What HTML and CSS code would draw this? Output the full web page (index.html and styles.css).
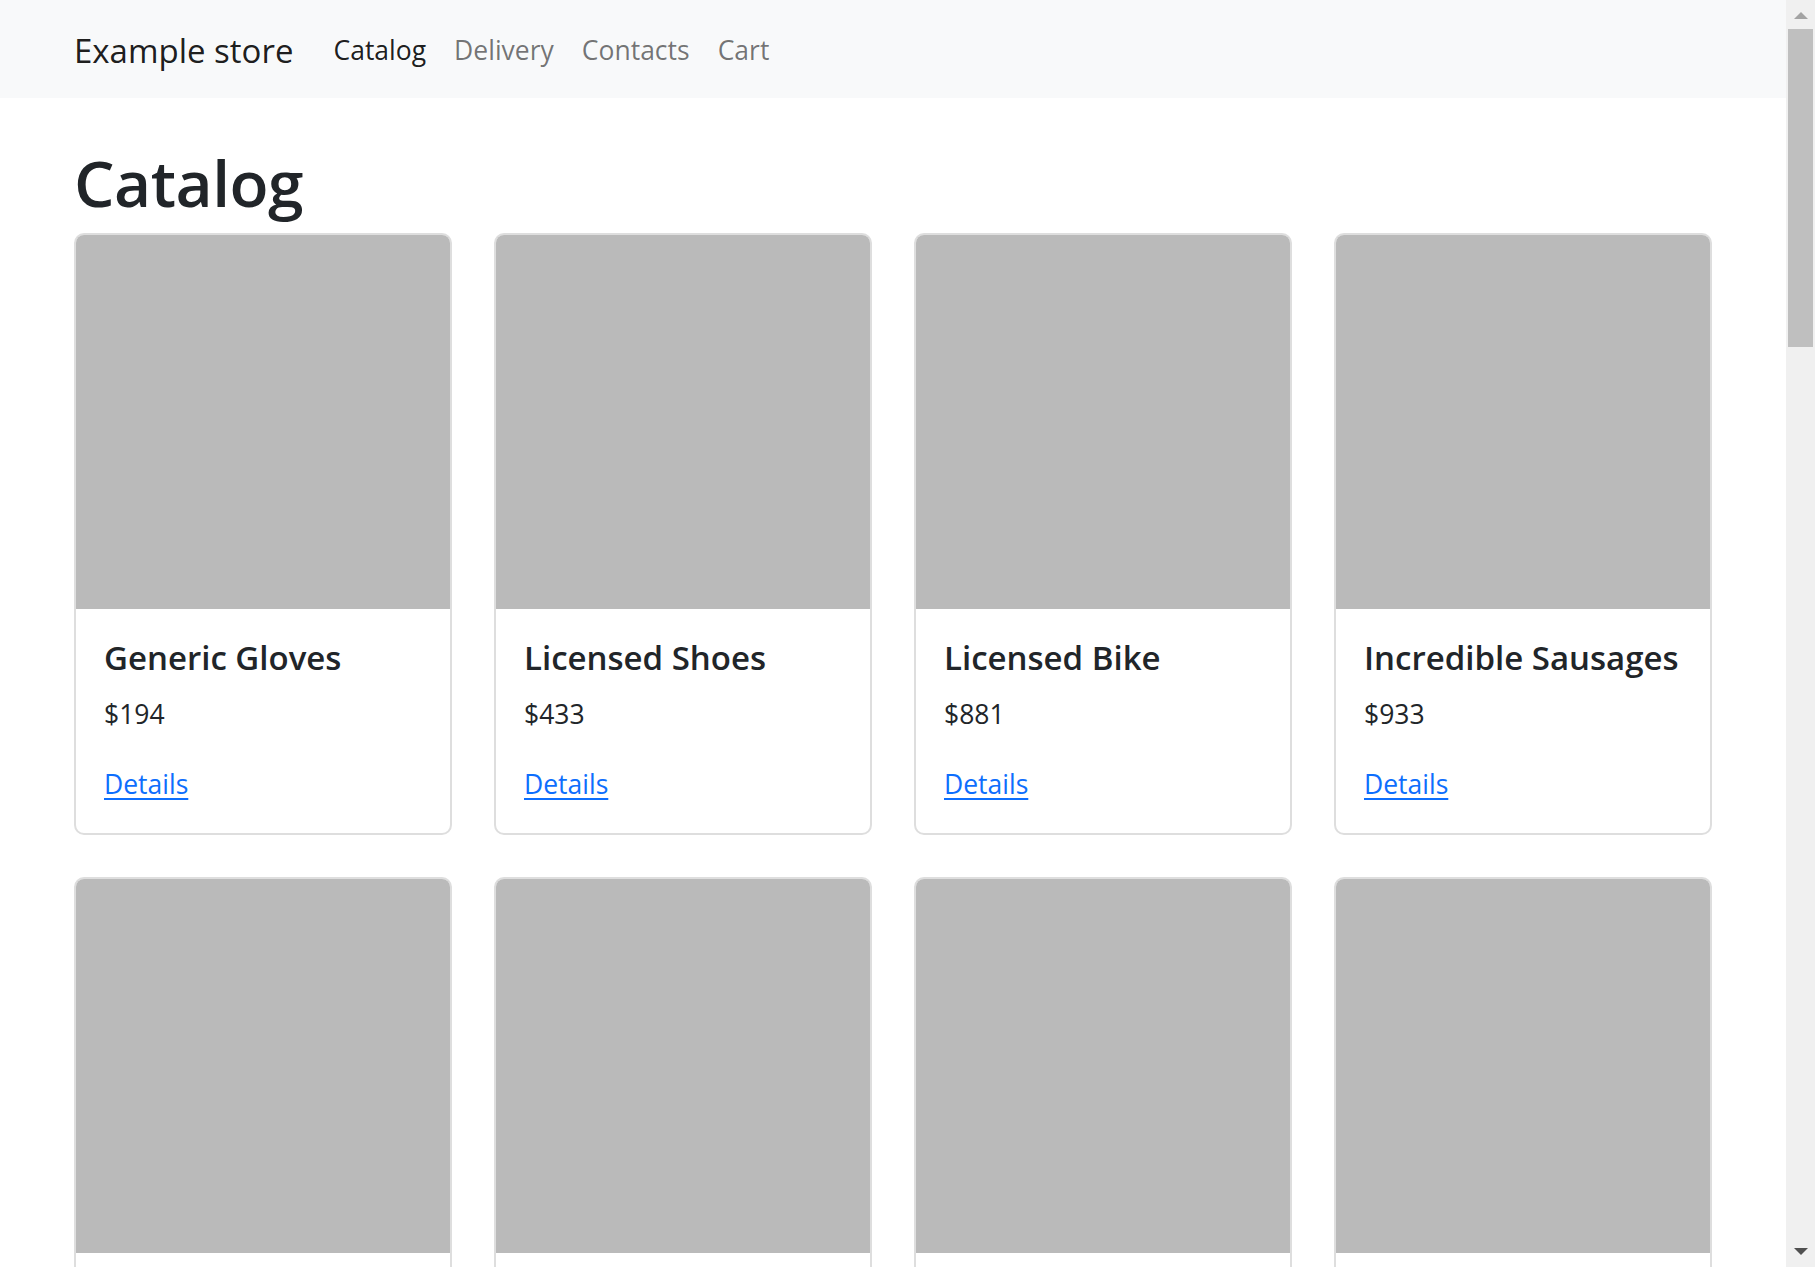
FILE: index.html
```html
<!DOCTYPE html>
<html lang="en">
<head>
<meta charset="utf-8">
<title>Example store</title>
<link rel="stylesheet" href="styles.css">
</head>
<body>
<div class="viewport">
<div class="page">
<nav class="navbar">
  <div class="container nav-inner">
    <a class="brand" href="#">Example store</a>
    <ul class="nav">
      <li><a class="nav-link active" href="#">Catalog</a></li>
      <li><a class="nav-link" href="#">Delivery</a></li>
      <li><a class="nav-link" href="#">Contacts</a></li>
      <li><a class="nav-link" href="#">Cart</a></li>
    </ul>
  </div>
</nav>
<main class="container main">
  <h1 class="page-title">Catalog</h1>
  <div class="grid">
    <div class="card"><div class="card-img"></div><div class="card-body"><h5 class="card-title">Generic Gloves</h5><p class="card-text">$194</p><a href="#" class="card-link">Details</a></div></div>
    <div class="card"><div class="card-img"></div><div class="card-body"><h5 class="card-title">Licensed Shoes</h5><p class="card-text">$433</p><a href="#" class="card-link">Details</a></div></div>
    <div class="card"><div class="card-img"></div><div class="card-body"><h5 class="card-title">Licensed Bike</h5><p class="card-text">$881</p><a href="#" class="card-link">Details</a></div></div>
    <div class="card"><div class="card-img"></div><div class="card-body"><h5 class="card-title">Incredible Sausages</h5><p class="card-text">$933</p><a href="#" class="card-link">Details</a></div></div>
    <div class="card"><div class="card-img"></div><div class="card-body"><h5 class="card-title">Handcrafted Chair</h5><p class="card-text">$112</p><a href="#" class="card-link">Details</a></div></div>
    <div class="card"><div class="card-img"></div><div class="card-body"><h5 class="card-title">Rustic Keyboard</h5><p class="card-text">$245</p><a href="#" class="card-link">Details</a></div></div>
    <div class="card"><div class="card-img"></div><div class="card-body"><h5 class="card-title">Sleek Table</h5><p class="card-text">$567</p><a href="#" class="card-link">Details</a></div></div>
    <div class="card"><div class="card-img"></div><div class="card-body"><h5 class="card-title">Refined Towels</h5><p class="card-text">$389</p><a href="#" class="card-link">Details</a></div></div>
    <div class="card"><div class="card-img"></div><div class="card-body"><h5 class="card-title">Gorgeous Mouse</h5><p class="card-text">$721</p><a href="#" class="card-link">Details</a></div></div>
    <div class="card"><div class="card-img"></div><div class="card-body"><h5 class="card-title">Practical Pizza</h5><p class="card-text">$54</p><a href="#" class="card-link">Details</a></div></div>
    <div class="card"><div class="card-img"></div><div class="card-body"><h5 class="card-title">Unbranded Hat</h5><p class="card-text">$318</p><a href="#" class="card-link">Details</a></div></div>
    <div class="card"><div class="card-img"></div><div class="card-body"><h5 class="card-title">Awesome Cheese</h5><p class="card-text">$690</p><a href="#" class="card-link">Details</a></div></div>
    <div class="card"><div class="card-img"></div><div class="card-body"><h5 class="card-title">Tasty Soap</h5><p class="card-text">$143</p><a href="#" class="card-link">Details</a></div></div>
    <div class="card"><div class="card-img"></div><div class="card-body"><h5 class="card-title">Fantastic Car</h5><p class="card-text">$802</p><a href="#" class="card-link">Details</a></div></div>
    <div class="card"><div class="card-img"></div><div class="card-body"><h5 class="card-title">Small Ball</h5><p class="card-text">$276</p><a href="#" class="card-link">Details</a></div></div>
    <div class="card"><div class="card-img"></div><div class="card-body"><h5 class="card-title">Intelligent Shirt</h5><p class="card-text">$455</p><a href="#" class="card-link">Details</a></div></div>
    <div class="card"><div class="card-img"></div><div class="card-body"><h5 class="card-title">Ergonomic Fish</h5><p class="card-text">$99</p><a href="#" class="card-link">Details</a></div></div>
    <div class="card"><div class="card-img"></div><div class="card-body"><h5 class="card-title">Handmade Computer</h5><p class="card-text">$634</p><a href="#" class="card-link">Details</a></div></div>
    <div class="card"><div class="card-img"></div><div class="card-body"><h5 class="card-title">Generic Salad</h5><p class="card-text">$207</p><a href="#" class="card-link">Details</a></div></div>
    <div class="card"><div class="card-img"></div><div class="card-body"><h5 class="card-title">Licensed Pants</h5><p class="card-text">$378</p><a href="#" class="card-link">Details</a></div></div>
    <div class="card"><div class="card-img"></div><div class="card-body"><h5 class="card-title">Rustic Chips</h5><p class="card-text">$512</p><a href="#" class="card-link">Details</a></div></div>
    <div class="card"><div class="card-img"></div><div class="card-body"><h5 class="card-title">Sleek Bacon</h5><p class="card-text">$866</p><a href="#" class="card-link">Details</a></div></div>
    <div class="card"><div class="card-img"></div><div class="card-body"><h5 class="card-title">Refined Tuna</h5><p class="card-text">$163</p><a href="#" class="card-link">Details</a></div></div>
    <div class="card"><div class="card-img"></div><div class="card-body"><h5 class="card-title">Gorgeous Bike</h5><p class="card-text">$749</p><a href="#" class="card-link">Details</a></div></div>
    <div class="card"><div class="card-img"></div><div class="card-body"><h5 class="card-title">Practical Shoes</h5><p class="card-text">$421</p><a href="#" class="card-link">Details</a></div></div>
    <div class="card"><div class="card-img"></div><div class="card-body"><h5 class="card-title">Unbranded Gloves</h5><p class="card-text">$588</p><a href="#" class="card-link">Details</a></div></div>
    <div class="card"><div class="card-img"></div><div class="card-body"><h5 class="card-title">Awesome Chicken</h5><p class="card-text">$301</p><a href="#" class="card-link">Details</a></div></div>
    <div class="card"><div class="card-img"></div><div class="card-body"><h5 class="card-title">Tasty Table</h5><p class="card-text">$955</p><a href="#" class="card-link">Details</a></div></div>
  </div>
</main>
</div>
<div class="scrollbar" aria-hidden="true">
  <div class="sb-btn"><span class="arrow-up"></span></div>
  <div class="sb-track"><div class="sb-thumb"></div></div>
  <div class="sb-btn"><span class="arrow-down"></span></div>
</div>
</div>
</body>
</html>
```

FILE: styles.css
```css
* {
  box-sizing: border-box;
}

html,
body {
  margin: 0;
  height: 100%;
  overflow: hidden;
}

body {
  font-family: "Open Sans", "Noto Sans", "Liberation Sans", sans-serif;
  font-size: 26.5px;
  line-height: 42px;
  color: #212529;
  background: #fff;
}

.viewport {
  display: flex;
  height: 100vh;
}

.page {
  flex: 1;
  min-width: 0;
  overflow-y: auto;
  scrollbar-width: none;
}

/* custom scrollbar column */
.scrollbar {
  flex: none;
  width: 29px;
  background: #f0f0f0;
  display: flex;
  flex-direction: column;
}

.sb-btn {
  height: 29px;
  flex: none;
  display: flex;
  justify-content: center;
  align-items: center;
}

.arrow-up {
  width: 0;
  height: 0;
  border-left: 7px solid transparent;
  border-right: 7px solid transparent;
  border-bottom: 7px solid #a3a3a3;
  margin-left: 1px;
  margin-top: 2px;
}

.arrow-down {
  width: 0;
  height: 0;
  border-left: 7px solid transparent;
  border-right: 7px solid transparent;
  border-top: 7px solid #505050;
  margin-left: 1px;
  margin-top: -2px;
}

.sb-track {
  flex: 1;
  padding: 0 2px;
}

.sb-thumb {
  height: 318px;
  background: #bfbfbf;
}

.container {
  width: 1680px;
  margin: 0 auto;
  padding: 0 21px;
}

.navbar {
  background: #f8f9fa;
  height: 98px;
}

.nav-inner {
  height: 98px;
  display: flex;
  align-items: center;
}

.brand {
  font-size: 33px;
  line-height: 52px;
  padding-top: 3px;
  color: rgba(0, 0, 0, 0.9);
  text-decoration: none;
  margin-right: 26px;
}

.nav {
  display: flex;
  list-style: none;
  margin: 0;
  padding: 0;
}

.nav-link {
  display: block;
  padding: 2px 14px 0;
  font-size: 26.5px;
  line-height: 42px;
  color: rgba(0, 0, 0, 0.55);
  text-decoration: none;
}

.nav-link.active {
  color: rgba(0, 0, 0, 0.9);
}

.main {
  padding-top: 42px;
  padding-bottom: 120px;
}

.page-title {
  margin: 0 0 14px;
  padding-top: 3px;
  height: 79px;
  font-size: 64px;
  line-height: 79px;
  font-weight: 600;
  letter-spacing: -0.5px;
  color: #212529;
}

.grid {
  display: grid;
  grid-template-columns: repeat(4, 1fr);
  gap: 42px;
}

.card {
  border: 2px solid #dedede;
  border-radius: 10px;
  overflow: hidden;
  background: #fff;
}

.card-img {
  height: 374px;
  background: #bababa;
}

.card-body {
  padding: 28px;
}

.card-title {
  margin: 0 0 14px;
  font-size: 33px;
  line-height: 42px;
  font-weight: 600;
}

.card-text {
  margin: 0 0 28px;
}

.card-link {
  color: #0d6efd;
  text-decoration: underline;
  text-underline-offset: 4px;
}
```
